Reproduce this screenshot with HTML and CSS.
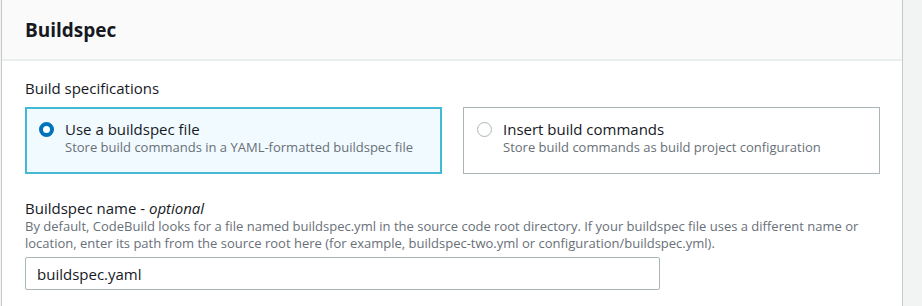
FILE: index.html
```html
<!DOCTYPE html>
<html lang="en">
<head>
    <meta charset="UTF-8">
    <meta name="viewport" content="width=device-width, initial-scale=1.0">
    <title>Buildspec</title>
    <link rel="stylesheet" href="styles.css">
</head>
<body>
    <div class="panel">
        <div class="panel-header">
            <h2>Buildspec</h2>
        </div>

        <div class="panel-body">
            <div class="form-field">
                <div class="field-label">Build specifications</div>
                <div class="tiles">
                    <label class="tile selected">
                        <span class="radio"></span>
                        <span class="tile-text">
                            <span class="tile-title">Use a buildspec file</span>
                            <span class="tile-desc">Store build commands in a YAML-formatted buildspec file</span>
                        </span>
                    </label>
                    <label class="tile">
                        <span class="radio"></span>
                        <span class="tile-text">
                            <span class="tile-title">Insert build commands</span>
                            <span class="tile-desc">Store build commands as build project configuration</span>
                        </span>
                    </label>
                </div>
            </div>

            <div class="form-field name-field">
                <label class="field-label" for="buildspecName">Buildspec name - <em>optional</em></label>
                <p class="field-desc">By default, CodeBuild looks for a file named buildspec.yml in the source code root directory. If your buildspec file uses a different name or location, enter its path from the source root here (for example, buildspec-two.yml or configuration/buildspec.yml).</p>
                <input type="text" id="buildspecName" value="buildspec.yaml">
            </div>
        </div>
    </div>
</body>
</html>
```

FILE: styles.css
```css
body {
    font-family: "Open Sans", "Noto Sans", Arial, sans-serif;
    margin: 0;
    padding: 0 0 0 1px;
    background-color: #f2f3f3;
    color: #16191f;
}

.panel {
    width: 900px;
    height: 306px;
    background-color: #ffffff;
    border-left: 1px solid #c4c9c9;
    border-right: 1px solid #c4c9c9;
}

.panel-header {
    height: 59px;
    background-color: #fafafa;
    border-bottom: 2px solid #eaeded;
    display: flex;
    align-items: center;
    padding: 0 23px;
}

.panel-header h2 {
    margin: 0;
    font-size: 19px;
    font-weight: 700;
    line-height: 22px;
}

.panel-body {
    padding: 17px 22px 0 23px;
}

.field-label {
    display: block;
    font-size: 15px;
    line-height: 20px;
    margin-bottom: 9px;
}

.field-label em {
    font-style: italic;
}

.tiles {
    display: flex;
    gap: 21px;
}

.tile {
    flex: 1;
    display: flex;
    align-items: flex-start;
    border: 1px solid #aab7b8;
    padding: 11px 13px 17px 13px;
    cursor: pointer;
}

.tile.selected {
    border: 2px solid #44b9d6;
    background-color: #f1faff;
    padding: 10px 12px 16px 12px;
}

.radio {
    flex: none;
    box-sizing: border-box;
    width: 15px;
    height: 15px;
    margin: 3px 11px 0 0;
    border: 1px solid #aab7b8;
    border-radius: 50%;
    background-color: #ffffff;
}

.tile.selected .radio {
    border: 4px solid #0073bb;
}

.tile-text {
    display: flex;
    flex-direction: column;
}

.tile-title {
    font-size: 15px;
    line-height: 20px;
}

.tile-desc {
    font-size: 13px;
    line-height: 17px;
    color: #687078;
}

.name-field {
    margin-top: 24px;
}

.name-field .field-label {
    margin-bottom: 0;
}

.field-desc {
    margin: 0 0 5px;
    font-size: 13px;
    line-height: 17px;
    color: #687078;
    max-width: 855px;
}

input[type="text"] {
    box-sizing: border-box;
    width: 635px;
    height: 33px;
    padding: 4px 11px;
    border: 1px solid #aab7b8;
    border-radius: 2px;
    font-family: inherit;
    font-size: 15px;
    color: #16191f;
}
```
